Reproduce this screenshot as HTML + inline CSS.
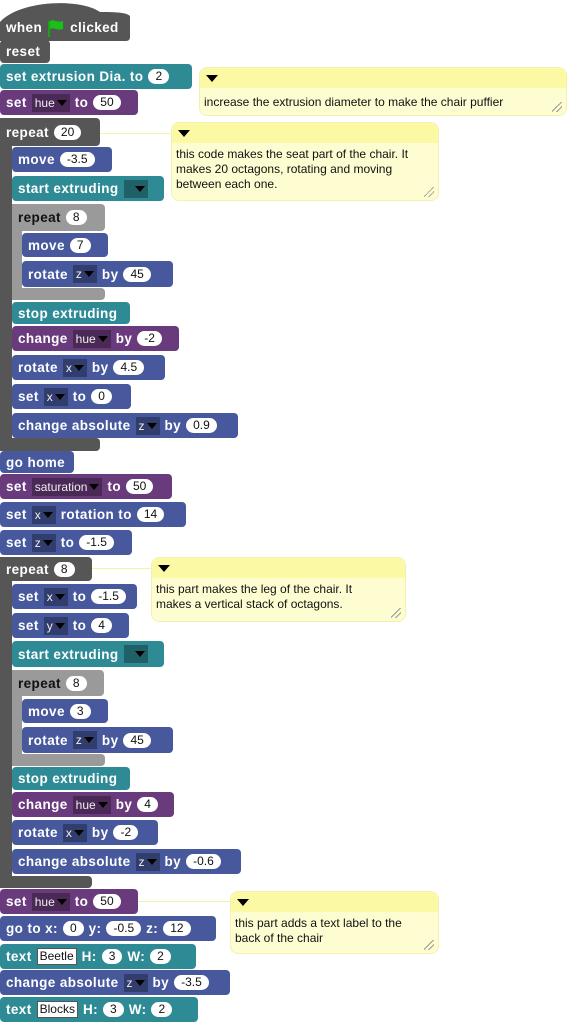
<!DOCTYPE html>
<html><head><meta charset="utf-8"><style>
body{margin:0;width:568px;height:1027px;background:#fff;position:relative;overflow:hidden;font-family:"Liberation Sans",sans-serif}
.b{position:absolute;display:flex;align-items:center;box-sizing:border-box;padding-left:6px;gap:5px;border-radius:4px;color:#fff;font-weight:bold;font-size:13.5px;white-space:nowrap;letter-spacing:0.4px}
.d{background:#565656}.t{background:#2e8b96}.p{background:#6a3b7c}.u{background:#47599c}.g{background:#9a9a9a;color:#111}
.i{background:#fff;color:#111;font-weight:normal;font-size:12px;border-radius:8px;padding:0 7px;height:15px;line-height:15px;letter-spacing:0}
.s{background:rgba(0,0,0,0.3);color:#eee;font-weight:normal;font-size:12px;padding:0 3px;height:18px;line-height:18px;letter-spacing:0;display:flex;align-items:center;gap:2px}
.s:after{content:"";border-left:5px solid transparent;border-right:5px solid transparent;border-top:6px solid #000}
.tx{background:#fff;color:#111;font-weight:normal;font-size:12px;padding:0 2px;border:1px solid #555;height:15px;line-height:15px;letter-spacing:0}
.arm{position:absolute}
.c{position:absolute;background:#fefdd1;border:1px solid #f4f1b0;border-radius:8px;box-sizing:border-box;font-size:12px;color:#111;line-height:15px}
.c .h{height:20px;background:#fcf9a5;border-radius:8px 8px 0 0;position:relative}
.c .h:after{content:"";position:absolute;left:6px;top:7px;border-left:6px solid transparent;border-right:6px solid transparent;border-top:7px solid #000}
.c .bd{padding:4px 12px 0 4px}
.c .r{position:absolute;right:4px;bottom:3px;width:10px;height:10px;background:linear-gradient(135deg,transparent 45%,#999 45%,#999 52%,transparent 52%,transparent 70%,#999 70%,#999 77%,transparent 77%)}
.ln{position:absolute;height:1px;background:#f4f1a8}
</style></head><body>
<svg style="position:absolute;left:0;top:0" width="132" height="42"><path d="M0 42V22C20 0 80 -2 100 12C112 12 126 12 130 16V37Q130 41 126 41H0z" fill="#565656"/></svg>
<div class="b d" style="left:0;top:14px;width:130px;height:27px;background:transparent">when <svg width="18" height="18" viewBox="0 0 18 18"><path d="M2 2v16" stroke="#1aa31a" stroke-width="2"/><path d="M3 2c4-2 7 2 13 0v8c-6 2-9-2-13 0z" fill="#18c018"/></svg> clicked</div>
<div class="b d" style="left:0;top:40px;width:50px;height:23px">reset</div>
<div class="b t" style="left:0;top:64px;width:192px;height:25px">set extrusion Dia. to <span class="i">2</span></div>
<div class="b p" style="left:0;top:90px;width:138px;height:25px">set <span class="s">hue</span> to <span class="i">50</span></div>

<div class="arm d" style="left:0;top:118px;width:12px;height:333px"></div>
<div class="arm d" style="left:0;top:438px;width:100px;height:13px;border-radius:0 4px 4px 4px"></div>
<div class="b d" style="left:0;top:118px;width:100px;height:28px">repeat <span class="i">20</span></div>
<div class="b u" style="left:12px;top:147px;width:100px;height:25px">move <span class="i">-3.5</span></div>
<div class="b t" style="left:12px;top:176px;width:152px;height:25px">start extruding <span class="s" style="width:18px;justify-content:flex-end"></span></div>
<div class="arm g" style="left:12px;top:204px;width:10px;height:96px"></div>
<div class="arm g" style="left:12px;top:288px;width:93px;height:12px;border-radius:0 4px 4px 4px"></div>
<div class="b g" style="left:12px;top:204px;width:93px;height:27px">repeat <span class="i">8</span></div>
<div class="b u" style="left:22px;top:233px;width:86px;height:24px">move <span class="i">7</span></div>
<div class="b u" style="left:22px;top:261px;width:151px;height:26px">rotate <span class="s">z</span> by <span class="i">45</span></div>
<div class="b t" style="left:12px;top:302px;width:118px;height:22px">stop extruding</div>
<div class="b p" style="left:12px;top:326px;width:167px;height:25px">change <span class="s">hue</span> by <span class="i">-2</span></div>
<div class="b u" style="left:12px;top:355px;width:153px;height:25px">rotate <span class="s">x</span> by <span class="i">4.5</span></div>
<div class="b u" style="left:12px;top:384px;width:119px;height:25px">set <span class="s">x</span> to <span class="i">0</span></div>
<div class="b u" style="left:12px;top:413px;width:226px;height:25px">change absolute <span class="s">z</span> by <span class="i">0.9</span></div>

<div class="b u" style="left:0;top:451px;width:74px;height:22px">go home</div>
<div class="b p" style="left:0;top:474px;width:172px;height:25px">set <span class="s">saturation</span> to <span class="i">50</span></div>
<div class="b u" style="left:0;top:502px;width:186px;height:25px">set <span class="s">x</span> rotation to <span class="i">14</span></div>
<div class="b u" style="left:0;top:530px;width:132px;height:25px">set <span class="s">z</span> to <span class="i">-1.5</span></div>

<div class="arm d" style="left:0;top:557px;width:12px;height:331px"></div>
<div class="arm d" style="left:0;top:876px;width:92px;height:12px;border-radius:0 4px 4px 4px"></div>
<div class="b d" style="left:0;top:557px;width:92px;height:24px">repeat <span class="i">8</span></div>
<div class="b u" style="left:12px;top:584px;width:125px;height:25px">set <span class="s">x</span> to <span class="i">-1.5</span></div>
<div class="b u" style="left:12px;top:613px;width:117px;height:25px">set <span class="s">y</span> to <span class="i">4</span></div>
<div class="b t" style="left:12px;top:641px;width:152px;height:26px">start extruding <span class="s" style="width:18px;justify-content:flex-end"></span></div>
<div class="arm g" style="left:12px;top:670px;width:10px;height:96px"></div>
<div class="arm g" style="left:12px;top:754px;width:93px;height:12px;border-radius:0 4px 4px 4px"></div>
<div class="b g" style="left:12px;top:670px;width:92px;height:26px">repeat <span class="i">8</span></div>
<div class="b u" style="left:22px;top:699px;width:86px;height:24px">move <span class="i">3</span></div>
<div class="b u" style="left:22px;top:727px;width:151px;height:26px">rotate <span class="s">z</span> by <span class="i">45</span></div>
<div class="b t" style="left:12px;top:767px;width:118px;height:23px">stop extruding</div>
<div class="b p" style="left:12px;top:792px;width:162px;height:25px">change <span class="s">hue</span> by <span class="i">4</span></div>
<div class="b u" style="left:12px;top:820px;width:146px;height:25px">rotate <span class="s">x</span> by <span class="i">-2</span></div>
<div class="b u" style="left:12px;top:849px;width:229px;height:25px">change absolute <span class="s">z</span> by <span class="i">-0.6</span></div>

<div class="b p" style="left:0;top:889px;width:138px;height:25px">set <span class="s">hue</span> to <span class="i">50</span></div>
<div class="b u" style="left:0;top:916px;width:216px;height:25px">go to x: <span class="i">0</span> y: <span class="i">-0.5</span> z: <span class="i">12</span></div>
<div class="b t" style="left:0;top:944px;width:196px;height:25px">text <span class="tx">Beetle</span> H: <span class="i">3</span> W: <span class="i">2</span></div>
<div class="b u" style="left:0;top:970px;width:230px;height:25px">change absolute <span class="s">z</span> by <span class="i">-3.5</span></div>
<div class="b t" style="left:0;top:997px;width:198px;height:25px">text <span class="tx">Blocks</span> H: <span class="i">3</span> W: <span class="i">2</span></div>

<div class="ln" style="left:100px;top:133px;width:72px"></div>
<div class="ln" style="left:92px;top:568px;width:60px"></div>
<div class="ln" style="left:138px;top:901px;width:93px"></div>

<div class="c" style="left:199px;top:67px;width:368px;height:49px"><div class="h"></div><div class="bd" style="padding-top:7px">increase the extrusion diameter to make the chair puffier</div><div class="r"></div></div>
<div class="c" style="left:171px;top:122px;width:268px;height:79px"><div class="h"></div><div class="bd">this code makes the seat part of the chair. It makes 20 octagons, rotating and moving between each one.</div><div class="r"></div></div>
<div class="c" style="left:151px;top:557px;width:255px;height:65px"><div class="h"></div><div class="bd" style="padding-right:30px">this part makes the leg of the chair. It makes a vertical stack of octagons.</div><div class="r"></div></div>
<div class="c" style="left:230px;top:891px;width:209px;height:63px"><div class="h"></div><div class="bd" style="padding-right:20px">this part adds a text label to the back of the chair</div><div class="r"></div></div>
</body></html>
